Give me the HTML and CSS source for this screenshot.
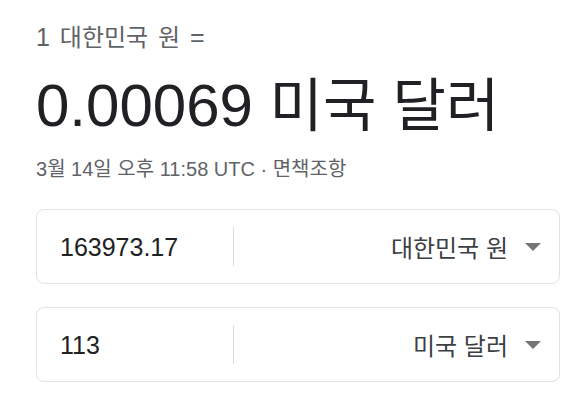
FILE: index.html
```html
<!DOCTYPE html>
<html lang="ko">
<head>
<meta charset="utf-8">
<link rel="stylesheet" href="styles.css">
</head>
<body>
<div class="wrap">
  <div class="eq">1 <span class="ko">대한민국 원</span> =</div>
  <div class="result">0.00069 <span class="ko">미국 달러</span></div>
  <div class="date">3<span class="ko">월</span> 14<span class="ko">일 오후</span> 11:58 UTC · <span class="ko">면책조항</span></div>
  <div class="box">
    <div class="amount">163973.17</div>
    <div class="divider"></div>
    <div class="unit"><span class="ko">대한민국 원</span><svg class="arrow" width="16" height="8" viewBox="0 0 16 8"><path d="M0 0h16L8 8z" fill="#757575"/></svg></div>
  </div>
  <div class="box box2">
    <div class="amount">113</div>
    <div class="divider"></div>
    <div class="unit"><span class="ko">미국 달러</span><svg class="arrow" width="16" height="8" viewBox="0 0 16 8"><path d="M0 0h16L8 8z" fill="#757575"/></svg></div>
  </div>
</div>
</body>
</html>
```
FILE: styles.css
```css
html, body { margin: 0; padding: 0; background: #fff; }
.wrap {
  padding: 20px 21px 0 36px;
  font-family: "Liberation Sans", Arial, "Noto Sans CJK KR", sans-serif;
}
.ko { font-family: "Noto Sans CJK KR", sans-serif; }
.eq { font-size: 25px; line-height: 32px; height: 32px; color: #5f6368; word-spacing: 3px; }
.eq .ko { font-size: 24px; }
.result { font-size: 60px; line-height: 72px; height: 72px; color: #202124; margin-top: 13px; white-space: nowrap; }
.result .ko { font-size: 58px; }
.date { font-size: 20px; line-height: 24px; height: 24px; color: #5f6368; margin-top: 19px; white-space: nowrap; }
.date .ko { font-size: 20px; }
.box {
  margin-top: 29px;
  height: 73px;
  border: 1px solid #dfe1e5;
  border-radius: 8px;
  display: flex;
  align-items: center;
  color: #202124;
  font-size: 25px;
}
.box2 { margin-top: 23px; }
.amount { width: 173px; padding-left: 23px; line-height: 30px; height: 30px; }
.divider { width: 1px; height: 39px; background: #dadce0; }
.unit {
  flex: 1;
  display: flex;
  justify-content: flex-end;
  align-items: center;
  gap: 17px;
  padding-right: 18px;
  color: #3c4043;
  height: 30px;
}
.unit .ko { font-size: 24px; line-height: 30px; }
.arrow { display: block; }
```
